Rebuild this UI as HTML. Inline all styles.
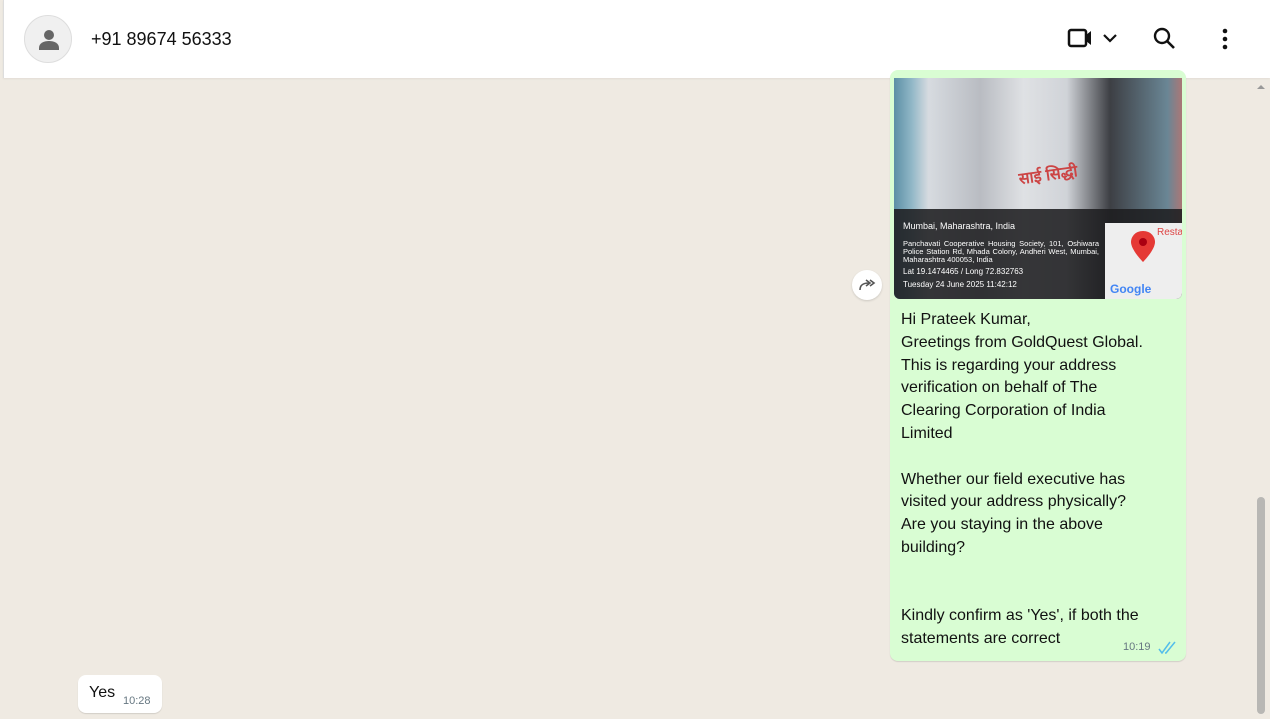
<!DOCTYPE html>
<html><head><meta charset="utf-8"><style>
*{margin:0;padding:0;box-sizing:border-box}
body{width:1270px;height:719px;overflow:hidden;background:#efeae2;font-family:"Liberation Sans",sans-serif;position:relative}
.hdr{position:absolute;left:3px;top:0;width:1267px;height:78px;background:#fff;border-left:1px solid #ddd;box-shadow:0 1px 2px rgba(0,0,0,.06)}
.av{position:absolute;left:20px;top:15px;width:48px;height:48px;border-radius:50%;background:#f0f0f0;border:1px solid #ddd}
.name{position:absolute;left:87px;top:29px;font-size:18px;color:#111}
.bub{position:absolute;left:890px;top:70px;width:296px;height:591px;background:#d9fdd3;border-radius:8px;box-shadow:0 1px 1px rgba(0,0,0,.12)}
.img{position:absolute;left:894px;top:78px;width:288px;height:221px;border-radius:0 0 6px 6px;overflow:hidden;background:linear-gradient(90deg,#5c8fa5 0,#8fb6c6 6%,#d7dbe0 12%,#b9bcc2 30%,#dfe1e4 45%,#d0d3d8 60%,#3d3f44 75%,#6a8695 95%,#a77 100%)}
.ov{position:absolute;left:0;top:131px;width:288px;height:90px;background:rgba(30,30,32,.88);color:#fff;font-size:8px;line-height:8px}
.map{position:absolute;right:0;top:14px;width:77px;height:76px;background:#eee}
.txt{position:absolute;left:901px;top:309px;font-size:16px;line-height:22.8px;color:#111;white-space:pre}
.time{position:absolute;font-size:11px;color:#667781}
.yes{position:absolute;left:78px;top:675px;width:84px;height:38px;background:#fff;border-radius:8px;box-shadow:0 1px 1px rgba(0,0,0,.12)}
.fwd{position:absolute;left:852px;top:270px;width:30px;height:30px;border-radius:50%;background:#fff;box-shadow:0 1px 2px rgba(0,0,0,.15)}
.sb{position:absolute;left:1257px;top:497px;width:8px;height:217px;background:#b8b7b4;border-radius:4px}
</style></head><body>
<div class="hdr">
<div class="av"><svg width="48" height="48" viewBox="0 0 48 48"><circle cx="24" cy="19" r="5" fill="#666"/><path d="M14 32c0-5 5-7 10-7s10 2 10 7v2H14z" fill="#666"/></svg></div>
<div class="name">+91 89674 56333</div>
<svg style="position:absolute;left:1062px;top:26px" width="60" height="26" viewBox="0 0 60 26"><rect x="3" y="4" width="17" height="16" rx="2" fill="none" stroke="#111" stroke-width="2.5"/><path d="M20 9l5-4v14l-5-4z" fill="#111"/><path d="M38 9l6 6 6-6" fill="none" stroke="#111" stroke-width="2.2"/></svg>
<svg style="position:absolute;left:1148px;top:26px" width="26" height="26" viewBox="0 0 26 26"><circle cx="10" cy="10" r="7" fill="none" stroke="#111" stroke-width="2.4"/><path d="M15 15l7 7" stroke="#111" stroke-width="2.6"/></svg>
<svg style="position:absolute;left:1213px;top:27px" width="16" height="24" viewBox="0 0 16 24"><circle cx="8" cy="4" r="2.3" fill="#111"/><circle cx="8" cy="12" r="2.3" fill="#111"/><circle cx="8" cy="20" r="2.3" fill="#111"/></svg>
</div>
<div class="fwd"><svg width="30" height="30" viewBox="0 0 30 30"><path d="M8 20c0-5 3-7 9-7M14 10l4 3-4 3" fill="none" stroke="#555" stroke-width="1.6"/><path d="M18 10l4 3-4 3" fill="none" stroke="#555" stroke-width="1.6"/></svg></div>
<div class="bub"></div>
<div class="img">
<div style="position:absolute;left:125px;top:85px;width:62px;height:30px;color:#c44;font-size:16px;font-weight:bold;transform:rotate(-8deg)">साई सिद्धी</div>
<div class="ov">
<div style="position:absolute;left:9px;top:13px;font-size:9px">Mumbai, Maharashtra, India</div>
<div style="position:absolute;left:9px;top:31px;width:196px;font-size:7.5px;line-height:8px;text-align:justify">Panchavati Cooperative Housing Society, 101, Oshiwara Police Station Rd, Mhada Colony, Andheri West, Mumbai, Maharashtra 400053, India</div>
<div style="position:absolute;left:9px;top:59px">Lat 19.1474465 / Long 72.832763</div>
<div style="position:absolute;left:9px;top:72px">Tuesday 24 June 2025 11:42:12</div>
<div class="map"><svg width="77" height="76"><path d="M38 8c-8 0-12 6-12 11 0 8 12 20 12 20s12-12 12-20c0-5-4-11-12-11z" fill="#e53935"/><circle cx="38" cy="19" r="4" fill="#a01"/><text x="52" y="12" font-size="10" fill="#d44">Resta</text><text x="5" y="70" font-size="12" fill="#4285f4" font-weight="bold">Google</text></svg></div>
</div></div>
<div class="txt">Hi Prateek Kumar,
Greetings from GoldQuest Global.
This is regarding your address
verification on behalf of The
Clearing Corporation of India
Limited

Whether our field executive has
visited your address physically?
Are you staying in the above
building?


Kindly confirm as 'Yes', if both the
statements are correct</div>
<div class="time" style="left:1123px;top:641px">10:19</div>
<svg style="position:absolute;left:1158px;top:641px" width="20" height="14" viewBox="0 0 20 14"><path d="M1 8l3 4 8-11M7 12l1 0 9-11" fill="none" stroke="#53bdeb" stroke-width="1.5"/></svg>
<div class="yes"><span style="position:absolute;left:11px;top:9px;font-size:16px;color:#111">Yes</span><span class="time" style="left:45px;top:20px">10:28</span></div>
<svg style="position:absolute;left:1256px;top:83px" width="10" height="8"><path d="M1 6l4-4 4 4z" fill="#999"/></svg>
<div class="sb"></div>
</body></html>
